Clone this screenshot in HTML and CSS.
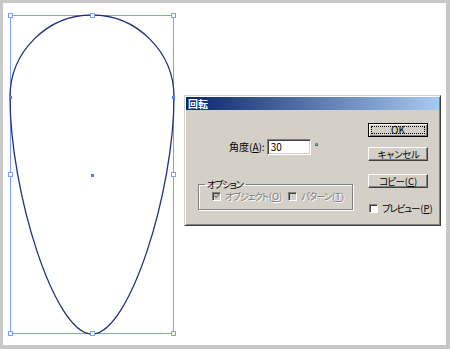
FILE: index.html
```html
<!DOCTYPE html>
<html lang="ja">
<head>
  <meta charset="UTF-8">
  <title>回転</title>
  <link rel="stylesheet" href="styles.css">
</head>
<body>

<div class="artboard">
  <!-- 選択されたオブジェクト -->
  <svg class="shape" viewBox="3 3 443 342" width="443" height="342">
    <rect x="10.5" y="15.5" width="163" height="318" fill="none" stroke="#7d9dff" stroke-width="1"/>
    <path d="M92,15 C137,15 174,52 174,97 C174,190 130,334 92,334 C54,334 10,190 10,97 C10,52 47,15 92,15 Z"
          fill="none" stroke="#22307e" stroke-width="1.3"/>
    <g fill="#fff" stroke="#7d9dff" stroke-width="1">
      <rect x="8.5" y="13.5" width="4" height="4"/>
      <rect x="90.5" y="13.5" width="4" height="4"/>
      <rect x="171.5" y="13.5" width="4" height="4"/>
      <rect x="8.5" y="172.5" width="4" height="4"/>
      <rect x="171.5" y="172.5" width="4" height="4"/>
      <rect x="8.5" y="331.5" width="4" height="4"/>
      <rect x="90.5" y="331.5" width="4" height="4"/>
      <rect x="171.5" y="331.5" width="4" height="4"/>
    </g>
    <g fill="#5a7cf0">
      <rect x="9" y="96" width="3" height="3"/>
      <rect x="172" y="96" width="3" height="3"/>
      <rect x="91" y="174" width="3" height="3"/>
    </g>
  </svg>

  <!-- ダイアログ -->
  <div class="dialog">
    <div class="titlebar">回転</div>
    <div class="dialog-body">
      <div class="left-col">
        <div class="angle-row">
          <span class="label">角度(<u>A</u>):</span>
          <div class="field">30</div>
          <span class="deg">°</span>
        </div>
        <fieldset class="group">
          <legend class="kana">オプション</legend>
          <div class="check-row">
            <span class="check disabled">
              <svg width="6" height="6" viewBox="0 0 6 6"><path d="M0.5,2.5 L2.2,4.3 L5.5,0.8" fill="none" stroke="#808080" stroke-width="1.3"/></svg>
            </span>
            <span class="check-label kana disabled-text">オブジェクト<span class="acc">(<u>O</u>)</span></span>
            <span class="check disabled"></span>
            <span class="check-label kana disabled-text">パターン<span class="acc">(<u>T</u>)</span></span>
          </div>
        </fieldset>
      </div>
      <div class="right-col">
        <button class="btn default">OK</button>
        <button class="btn kana">キャンセル</button>
        <button class="btn copy kana">コピー<span class="acc">(<u>C</u>)</span></button>
        <div class="preview-row">
          <span class="check"></span>
          <span class="check-label kana">プレビュー<span class="acc">(<u>P</u>)</span></span>
        </div>
      </div>
    </div>
  </div>
</div>

</body>
</html>
```

FILE: styles.css
```css
body {
  margin: 0;
  padding: 0;
  background: #fff;
  font-family: "Noto Sans CJK JP", "Noto Sans", sans-serif;
}

.artboard {
  position: relative;
  width: 450px;
  height: 349px;
  box-sizing: border-box;
  border: 3px solid #c8c8c8;
  border-right-width: 4px;
  border-bottom-width: 4px;
  background: #fff;
}

.shape {
  position: absolute;
  left: 0;
  top: 0;
}

.dialog {
  position: absolute;
  left: 181px;
  top: 92px;
  width: 257px;
  height: 131px;
  box-sizing: border-box;
  padding: 1px;
  background: #d4d0c8;
  border: 1px solid;
  border-color: #d4d0c8 #404040 #404040 #d4d0c8;
  box-shadow: inset 1px 1px #fff, inset -1px -1px #808080;
  font-size: 10px;
  font-feature-settings: "palt";
  white-space: nowrap;
  color: #000;
}

/* カタカナは MS UI Gothic 風に詰める */
.kana {
  font-size: 9.5px;
  letter-spacing: -1.2px;
}

.acc {
  letter-spacing: 0;
  margin-left: 1px;
}

.titlebar {
  height: 13px;
  line-height: 13px;
  padding-left: 2px;
  background: linear-gradient(to right, #0a246a, #a6caf0);
  color: #fff;
  font-weight: bold;
  font-size: 10px;
}

.dialog-body {
  display: flex;
}

.left-col {
  flex: none;
  width: 155px;
  margin-left: 12px;
}

.angle-row {
  display: flex;
  align-items: center;
  margin-top: 29px;
  padding-left: 31px;
  height: 16px;
}

.label {
  line-height: 12px;
}

.field {
  flex: none;
  width: 44px;
  height: 16px;
  box-sizing: border-box;
  margin-left: 2px;
  padding-left: 3px;
  line-height: 14px;
  background: #fff;
  border: 1px solid;
  border-color: #808080 #fff #fff #808080;
  box-shadow: inset 1px 1px #404040, inset -1px -1px #d4d0c8;
}

.deg {
  margin-left: 4px;
  line-height: 12px;
}

.group {
  margin: 23px 0 0 0;
  padding: 0 6px 6px 6px;
  min-width: 0;
  height: 32px;
  box-sizing: border-box;
  border: 1px solid #808080;
  box-shadow: inset 1px 1px #fff, 1px 1px #fff;
}

.group legend {
  padding: 0 3px 0 2px;
  line-height: 12px;
  height: 12px;
}

.check-row {
  display: flex;
  align-items: center;
  height: 12px;
  padding-left: 7px;
}

.check {
  flex: none;
  display: flex;
  align-items: center;
  justify-content: center;
  width: 9px;
  height: 9px;
  box-sizing: border-box;
  background: #fff;
  border: 1px solid;
  border-color: #808080 #fff #fff #808080;
  box-shadow: inset 1px 1px #404040;
}

.check.disabled {
  background: #d4d0c8;
}

.check-label {
  flex: none;
  margin-left: 4px;
  line-height: 12px;
}

.check-row .check-label {
  margin-right: 6px;
}

.disabled-text {
  color: #808080;
  text-shadow: 1px 1px #fff;
}

.right-col {
  flex: none;
  display: flex;
  flex-direction: column;
  margin-left: 15px;
  width: 60px;
}

.btn {
  flex: none;
  width: 60px;
  height: 14px;
  margin: 10px 0 0 0;
  padding: 0;
  box-sizing: border-box;
  font-family: inherit;
  font-size: 10px;
  line-height: 10px;
  color: #000;
  background: #d4d0c8;
  border: 1px solid;
  border-color: #fff #404040 #404040 #fff;
  box-shadow: inset -1px -1px #808080;
}

.btn.kana {
  font-size: 9.5px;
}

.btn.default {
  margin-top: 13px;
  border-color: #000;
  box-shadow: inset 1px 1px #fff, inset -1px -1px #808080;
  outline: 1px dotted #000;
  outline-offset: -4px;
}

.btn.copy {
  margin-top: 13px;
}

.preview-row {
  display: flex;
  align-items: center;
  margin-top: 15px;
  height: 10px;
  padding-left: 1px;
}
```
